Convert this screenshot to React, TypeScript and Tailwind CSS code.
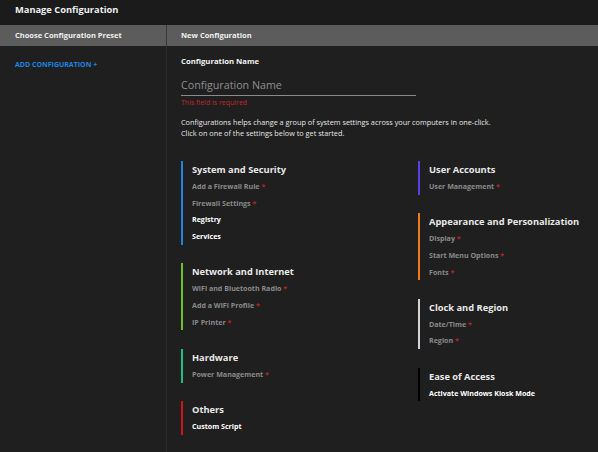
import React from 'react'

type Item = { label: string; required?: boolean }
type Group = { title: string; bar: string; items: Item[] }

const leftGroups: Group[] = [
  {
    title: 'System and Security',
    bar: 'bg-[#1f84e0]',
    items: [
      { label: 'Add a Firewall Rule', required: true },
      { label: 'Firewall Settings', required: true },
      { label: 'Registry' },
      { label: 'Services' },
    ],
  },
  {
    title: 'Network and Internet',
    bar: 'bg-[#6cc11e]',
    items: [
      { label: 'WiFi and Bluetooth Radio', required: true },
      { label: 'Add a WiFi Profile', required: true },
      { label: 'IP Printer', required: true },
    ],
  },
  {
    title: 'Hardware',
    bar: 'bg-[#1fbf7f]',
    items: [{ label: 'Power Management', required: true }],
  },
  {
    title: 'Others',
    bar: 'bg-[#d0141b]',
    items: [{ label: 'Custom Script' }],
  },
]

const rightGroups: Group[] = [
  {
    title: 'User Accounts',
    bar: 'bg-[#5a3ee6]',
    items: [{ label: 'User Management', required: true }],
  },
  {
    title: 'Appearance and Personalization',
    bar: 'bg-[#ee7a1c]',
    items: [
      { label: 'Display', required: true },
      { label: 'Start Menu Options', required: true },
      { label: 'Fonts', required: true },
    ],
  },
  {
    title: 'Clock and Region',
    bar: 'bg-[#d4d4d4]',
    items: [
      { label: 'Date/Time', required: true },
      { label: 'Region', required: true },
    ],
  },
  {
    title: 'Ease of Access',
    bar: 'bg-black',
    items: [{ label: 'Activate Windows Kiosk Mode' }],
  },
]

const SettingGroup = ({ group }: { group: Group }) => {
  return (
    <div className="flex">
      <div className={`w-[2px] shrink-0 ${group.bar}`} />
      <div className="pl-[9px]">
        <div className="h-[17px] leading-[17px] text-[9.3px] font-bold text-[#e8e8e8] whitespace-nowrap">
          {group.title}
        </div>
        {group.items.map((item) => (
          <div
            key={item.label}
            className={`h-[16.7px] leading-[16.7px] text-[7.1px] font-bold whitespace-nowrap ${
              item.required ? 'text-[#8a8a8a]' : 'text-white'
            }`}
          >
            {item.label}
            {item.required && <span className="text-[#b8232c]"> *</span>}
          </div>
        ))}
      </div>
    </div>
  )
}

const App = () => {
  return (
    <div
      className="w-[598px] h-[452px] bg-[#1f1f1f] text-white overflow-hidden flex flex-col"
      style={{ fontFamily: '"Open Sans", "Noto Sans", sans-serif' }}
    >
      <div className="h-[25px] shrink-0 px-[15px] pt-[3px] bg-[#1b1b1b]">
        <h1 className="text-[9.3px] leading-[14px] font-bold text-[#f0f0f0]">
          Manage Configuration
        </h1>
      </div>

      <div className="h-[21px] shrink-0 flex bg-[#5c5c5c] text-[7.5px] font-bold text-[#f0f0f0]">
        <div className="w-[167px] flex items-center px-[15px] border-r border-[#3a3a3a]">
          Choose Configuration Preset
        </div>
        <div className="flex items-center px-[14px]">New Configuration</div>
      </div>

      <div className="flex flex-1 min-h-0">
        <div className="w-[167px] shrink-0 border-r border-[#2c2c2c] px-[15px] pt-[14px]">
          <button className="block text-[7px] leading-[10px] font-bold text-[#1f84e0]">
            ADD CONFIGURATION +
          </button>
        </div>

        <div className="flex-1 pl-[14px] pt-[10px]">
          <div className="text-[7.7px] leading-[11.5px] font-bold text-[#f2f2f2]">
            Configuration Name
          </div>
          <div className="w-[235px] mt-[9.5px] border-b border-[#8a8a8a] pb-[2px]">
            <input
              placeholder="Configuration Name"
              className="block w-full h-[16px] bg-transparent text-[10.7px] leading-[16px] text-white placeholder:text-[#8e8e8e] outline-none"
            />
          </div>
          <div className="mt-[2px] text-[7px] leading-[10.5px] text-[#c2262f]">
            This field is required
          </div>
          <div className="mt-[8px] text-[7.3px] leading-[11px] text-[#e6e6e6]">
            Configurations helps change a group of system settings across your computers in one-click.
            <br />
            Click on one of the settings below to get started.
          </div>

          <div className="mt-[22.5px] flex">
            <div className="w-[237px] shrink-0 flex flex-col gap-[18.5px]">
              {leftGroups.map((g) => (
                <SettingGroup key={g.title} group={g} />
              ))}
            </div>
            <div className="flex flex-col gap-[18.5px]">
              {rightGroups.map((g) => (
                <SettingGroup key={g.title} group={g} />
              ))}
            </div>
          </div>
        </div>
      </div>
    </div>
  )
}

export default App
